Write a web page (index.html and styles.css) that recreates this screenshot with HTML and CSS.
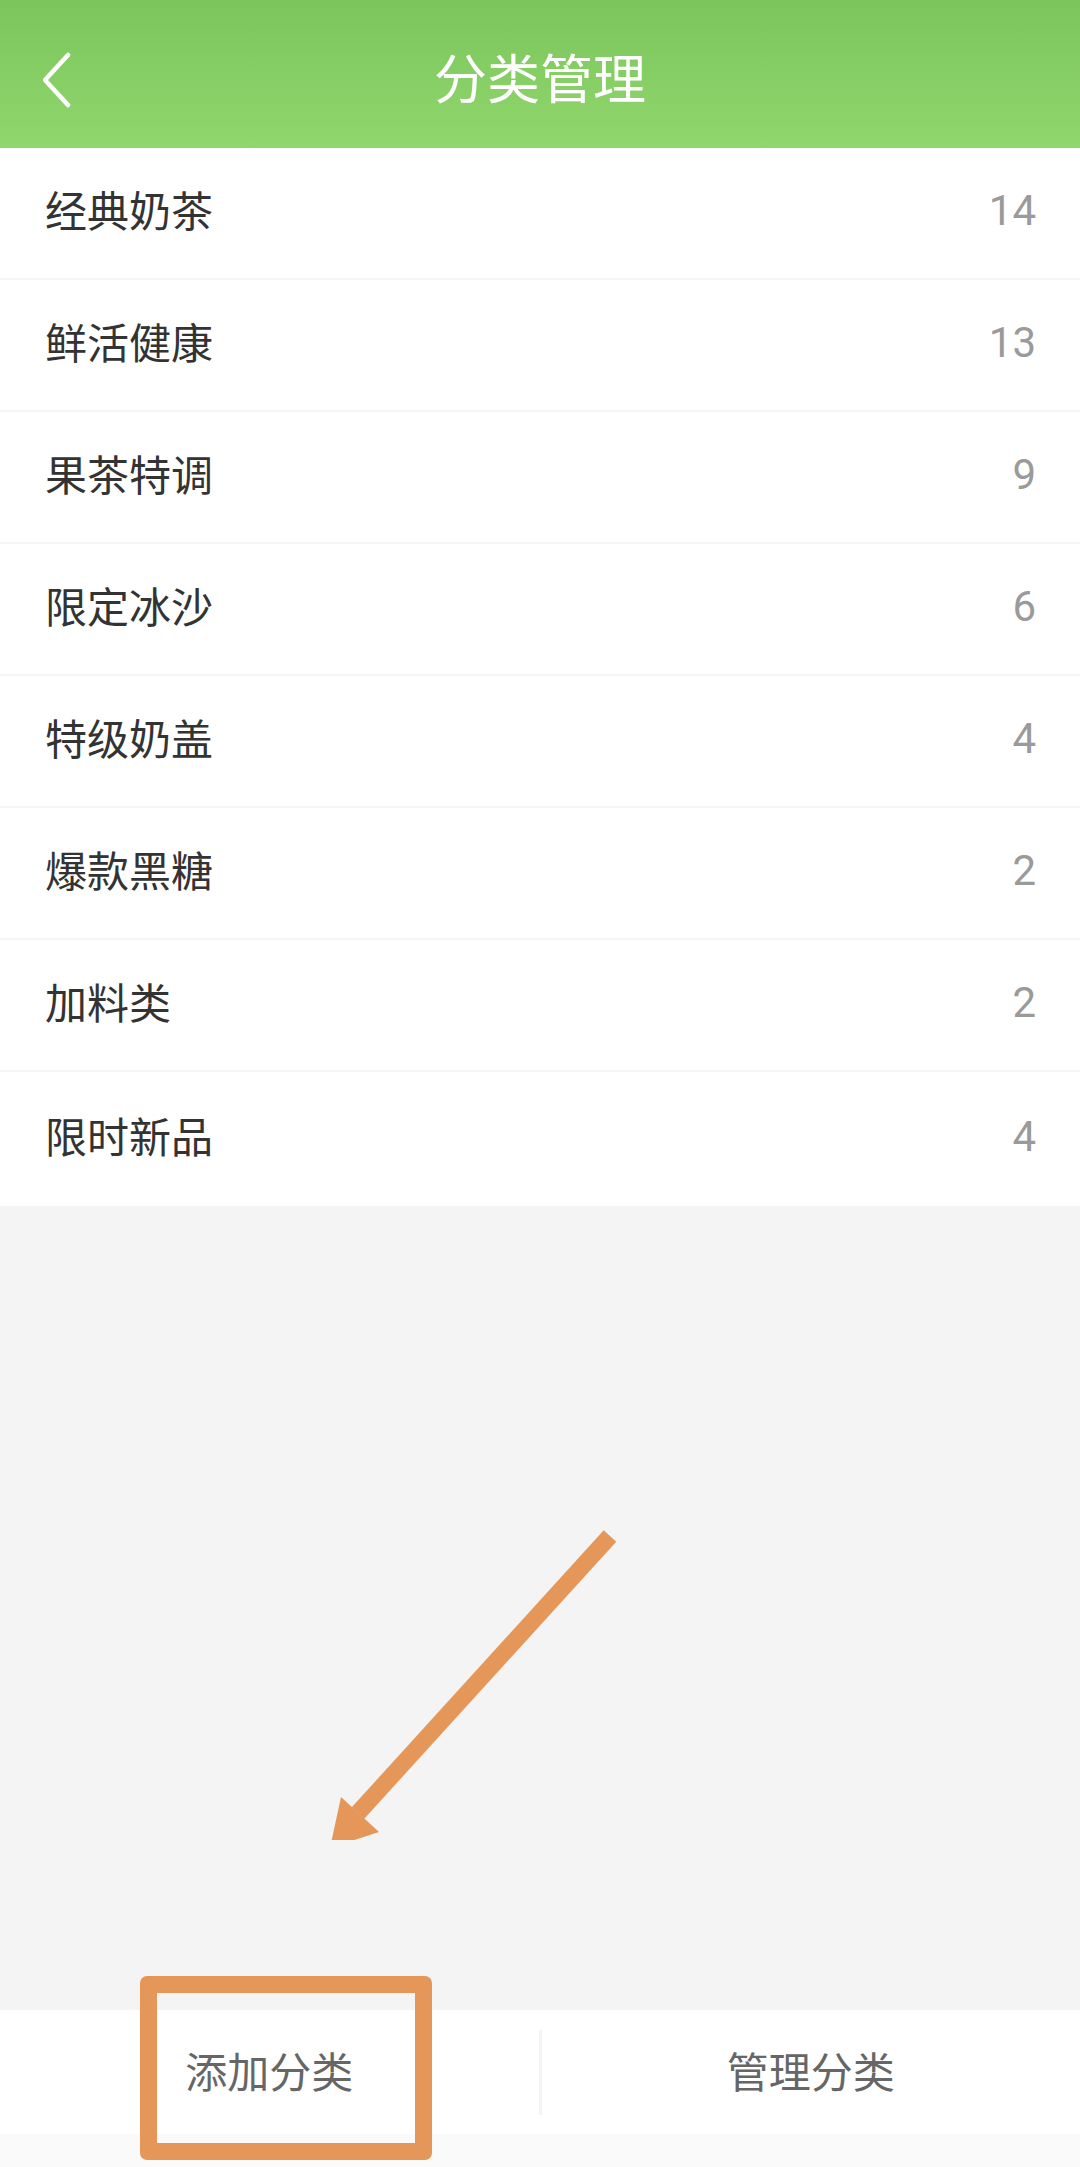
FILE: index.html
```html
<!DOCTYPE html>
<html lang="zh">
<head>
<meta charset="utf-8">
<title>分类管理</title>
<link rel="stylesheet" href="styles.css">
</head>
<body>
<div class="page">
  <header class="topbar">
    <svg class="back" width="40" height="60" viewBox="0 0 40 60">
      <polyline points="25,7 2,32 25,57" fill="none" stroke="#fff" stroke-width="4.5" stroke-linecap="round" stroke-linejoin="round"/>
    </svg>
    <h1 class="title">分类管理</h1>
  </header>

  <ul class="list">
    <li class="row"><span class="name">经典奶茶</span><span class="count">14</span></li>
    <li class="row"><span class="name">鲜活健康</span><span class="count">13</span></li>
    <li class="row"><span class="name">果茶特调</span><span class="count">9</span></li>
    <li class="row"><span class="name">限定冰沙</span><span class="count">6</span></li>
    <li class="row"><span class="name">特级奶盖</span><span class="count">4</span></li>
    <li class="row"><span class="name">爆款黑糖</span><span class="count">2</span></li>
    <li class="row"><span class="name">加料类</span><span class="count">2</span></li>
    <li class="row"><span class="name">限时新品</span><span class="count">4</span></li>
  </ul>

  <div class="spacer"></div>

  <nav class="actions">
    <div class="action">添加分类</div>
    <div class="divider"></div>
    <div class="action">管理分类</div>
  </nav>
  <div class="footer"></div>

  <div class="highlight"></div>
  <svg class="arrow" width="320" height="340" viewBox="0 0 320 340">
    <line x1="310" y1="36" x2="58" y2="313" stroke="#e5975a" stroke-width="17"/>
    <polygon points="30,348 41,297 79,332" fill="#e5975a"/>
  </svg>
</div>
</body>
</html>
```
FILE: styles.css
```css
* { box-sizing: border-box; }
html, body {
  margin: 0;
  padding: 0;
}
body {
  width: 1080px;
  height: 2167px;
  background: #f4f4f4;
  font-family: "Noto Sans CJK SC", "Noto Sans", sans-serif;
  overflow: hidden;
}
.page {
  position: relative;
  width: 1080px;
  height: 2167px;
  display: flex;
  flex-direction: column;
}
.topbar {
  position: relative;
  height: 148px;
  flex: none;
  background: linear-gradient(180deg, #7bc55c 0%, #90d76d 100%);
  display: flex;
  align-items: center;
  justify-content: center;
}
.back {
  position: absolute;
  left: 43px;
  top: 48px;
}
.title {
  margin: 0;
  font-size: 53px;
  font-weight: 400;
  color: #fff;
  line-height: 1;
  margin-top: 4px;
}
.list {
  list-style: none;
  margin: 0;
  padding: 0;
  background: #fff;
  flex: none;
}
.row {
  height: 132px;
  padding: 0 44px 0 45px;
  display: flex;
  align-items: center;
  justify-content: space-between;
  border-bottom: 2px solid #f5f5f5;
}
.row:last-child {
  height: 134px;
  border-bottom: none;
}
.name {
  font-size: 42px;
  color: #333;
  margin-bottom: 10px;
}
.count {
  font-family: Roboto, "Noto Sans", sans-serif;
  font-size: 42px;
  color: #9a9a9a;
  margin-bottom: 5px;
}
.spacer {
  flex: 1;
}
.actions {
  flex: none;
  height: 124px;
  background: #fff;
  display: flex;
  align-items: center;
}
.action {
  flex: 1;
  text-align: center;
  font-size: 42px;
  color: #666;
  margin-bottom: 6px;
}
.divider {
  width: 3px;
  height: 85px;
  background: #f4f4f4;
}
.footer {
  flex: none;
  height: 33px;
  background: #fafafa;
}
.highlight {
  position: absolute;
  left: 140px;
  top: 1976px;
  width: 292px;
  height: 184px;
  border: 17px solid #e5975a;
  border-radius: 7px;
}
.arrow {
  position: absolute;
  left: 300px;
  top: 1500px;
}
```
